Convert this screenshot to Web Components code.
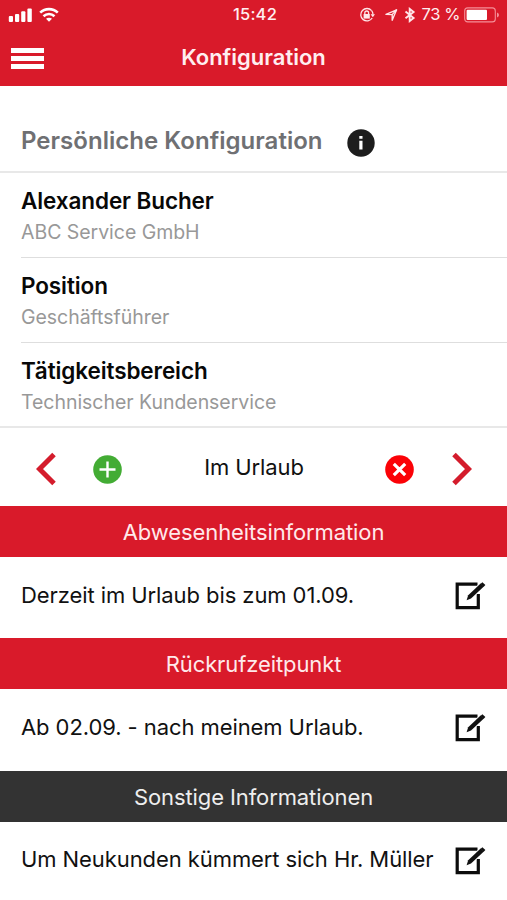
<!DOCTYPE html>
<html lang="de">
<head>
<meta charset="utf-8">
<title>Konfiguration</title>
<style>
  body {
    margin: 0;
    background: #fff;
    color: #111;
    font-family: Inter, "Liberation Sans", sans-serif;
    --red: #d91a2a;
  }
</style>
</head>
<body>
<config-app>
  <status-bar time="15:42" battery="73 %"></status-bar>
  <nav-bar>Konfiguration</nav-bar>
  <section-title>Persönliche Konfiguration</section-title>
  <profile-row label="Alexander Bucher">ABC Service GmbH</profile-row>
  <profile-row label="Position">Geschäftsführer</profile-row>
  <profile-row label="Tätigkeitsbereich" last>Technischer Kundenservice</profile-row>
  <status-picker>Im Urlaub</status-picker>
  <info-band>Abwesenheitsinformation</info-band>
  <info-row>Derzeit im Urlaub bis zum 01.09.</info-row>
  <info-band>Rückrufzeitpunkt</info-band>
  <info-row>Ab 02.09. - nach meinem Urlaub.</info-row>
  <info-band dark>Sonstige Informationen</info-band>
  <info-row>Um Neukunden kümmert sich Hr. Müller</info-row>
</config-app>

<script>
function define(name, html, setup) {
  const template = document.createElement('template');
  template.innerHTML = html;
  customElements.define(name, class extends HTMLElement {
    constructor() {
      super();
      this.attachShadow({ mode: 'open' });
      this.shadowRoot.appendChild(template.content.cloneNode(true));
      if (setup) setup(this, this.shadowRoot);
    }
  });
}

define('config-app', `
<style>
:host {
  display: flex;
  flex-direction: column;
  width: 507px;
  height: 900px;
  overflow: hidden;
}
::slotted(*) { flex: none; }
</style>
<slot></slot>
`);

define('status-bar', `
<style>
:host {
  display: grid;
  grid-template-columns: 1fr auto 1fr;
  align-items: center;
  height: 29px;
  padding: 0 7px 0 8px;
  box-sizing: border-box;
  background: var(--red);
  color: #ffeef0;
  font-size: 16.5px;
  line-height: 29px;
}
svg { display: block; }
.left { display: flex; align-items: center; gap: 7px; }
.time { font-weight: 500; letter-spacing: 0.2px; transform: translateX(1px); }
.right { display: flex; align-items: center; justify-content: flex-end; }
.battery { margin: 0 4px 0 6px; letter-spacing: -0.4px; }
</style>
<div class="left">
  <svg width="24" height="16" viewBox="0 0 24 16" fill="#fff">
    <rect x="0.8" y="9" width="4.2" height="6" rx="1"></rect>
    <rect x="7" y="7" width="4.2" height="8" rx="1"></rect>
    <rect x="13.2" y="4.2" width="4.2" height="10.8" rx="1"></rect>
    <rect x="19.4" y="1.5" width="4.4" height="13.5" rx="1"></rect>
  </svg>
  <svg width="20" height="16" viewBox="0 0 20 16" fill="none" stroke="#fff" stroke-width="2.6">
    <path d="M1.2 5.6C6.1 0.9 13.9 0.9 18.8 5.6"></path>
    <path d="M4.5 9.3C7.6 6.3 12.4 6.3 15.5 9.3"></path>
    <path d="M10 14.8L7 11.8C8.7 10.3 11.3 10.3 13 11.8Z" fill="#fff" stroke="none"></path>
  </svg>
</div>
<div class="time"></div>
<div class="right">
  <svg width="16" height="16" viewBox="0 0 16 16" fill="none" stroke="#ffe6e8" stroke-width="1.3">
    <path d="M12.6 3.6A6.2 6.2 0 1 0 13.2 11"></path>
    <path d="M12.6 3.6A6.2 6.2 0 0 1 14 7.4"></path>
    <path d="M11.6 7.2H16L13.8 10.2Z" fill="#ffe6e8" stroke="none"></path>
    <rect x="4.6" y="7" width="6.2" height="4.6" fill="#ffe6e8" stroke="none"></rect>
    <path d="M5.8 7V5.9A1.9 1.9 0 0 1 9.6 5.9V7"></path>
  </svg>
  <svg width="14" height="16" viewBox="0 0 14 16" fill="none" stroke="#ffe6e8" stroke-width="1.4" stroke-linejoin="round" style="margin-left: 9px">
    <path d="M12.6 2.8L8.2 13.2V7.6L2 7.4Z"></path>
    <path d="M12.6 2.8L8.2 7.6"></path>
  </svg>
  <svg width="12" height="16" viewBox="0 0 12 16" fill="none" stroke="#ffe6e8" stroke-width="1.9" style="margin-left: 6px">
    <path d="M1.5 4.6L9.6 10.9L5.7 14V1.9L9.6 5L1.5 11.3"></path>
  </svg>
  <span class="battery"></span>
  <svg width="36" height="16" viewBox="0 0 36 16">
    <rect x="0.7" y="0.9" width="30.6" height="14" rx="3" fill="none" stroke="#f58f98" stroke-width="1.1"></rect>
    <rect x="2.6" y="2.8" width="20.4" height="10.2" rx="1" fill="#fff"></rect>
    <path d="M33 5.6Q35 6.2 35 8Q35 9.8 33 10.4Z" fill="#f58f98"></path>
  </svg>
</div>
`, (host, root) => {
  root.querySelector('.time').textContent = host.getAttribute('time');
  root.querySelector('.battery').textContent = host.getAttribute('battery');
});

define('nav-bar', `
<style>
:host {
  display: grid;
  grid-template-columns: 1fr auto 1fr;
  align-items: center;
  height: 57px;
  padding: 0 11px;
  box-sizing: border-box;
  background: var(--red);
  color: #ffeef0;
  font-size: 22px;
  font-weight: 600;
  line-height: 54px;
}
.menu {
  display: grid;
  gap: 3px;
  width: 33px;
  padding-top: 2px;
}
.menu i { height: 5px; background: #fff; }
.title { padding-bottom: 2px; }
</style>
<div class="menu"><i></i><i></i><i></i></div>
<div class="title"><slot></slot></div>
`);

define('section-title', `
<style>
:host {
  display: flex;
  align-items: center;
  gap: 24.5px;
  height: 87px;
  padding: 23px 21px 0;
  box-sizing: border-box;
  border-bottom: 2px solid #e8e8e8;
  color: #6f7073;
  font-size: 24px;
  font-weight: 600;
  letter-spacing: 0.03px;
}
svg { display: block; margin-top: 5px; }
</style>
<span><slot></slot></span>
<svg width="28" height="28" viewBox="0 0 28 28">
  <circle cx="14" cy="14" r="13.7" fill="#1d1d1d"></circle>
  <path d="M12.3 7h3.2v2.8h-3.2zM12.3 11.8h3.2v8.8h-3.2z" fill="#fff"></path>
</svg>
`);

define('profile-row', `
<style>
:host {
  display: block;
  height: 85px;
  margin-left: 21px;
  box-sizing: border-box;
  padding-top: 13px;
  border-bottom: 1px solid #dedede;
}
:host([last]) {
  margin-left: 0;
  padding-left: 21px;
  border-bottom: 2px solid #e8e8e8;
}
.label {
  color: #080808;
  font-size: 22.5px;
  font-weight: 600;
  line-height: 30px;
  letter-spacing: -0.1px;
}
.value {
  padding-top: 1px;
  color: #989898;
  font-size: 19.5px;
  line-height: 30px;
  letter-spacing: -0.04px;
}
</style>
<div class="label"></div>
<div class="value"><slot></slot></div>
`, (host, root) => {
  root.querySelector('.label').textContent = host.getAttribute('label');
});

define('status-picker', `
<style>
:host {
  display: grid;
  grid-template-columns: 21px 29px 1fr 29px 21px;
  align-items: center;
  column-gap: 36px;
  height: 78px;
  padding: 4px 35px 0 36px;
  box-sizing: border-box;
  font-size: 22px;
  letter-spacing: -0.1px;
}
svg { display: block; }
.cancel { margin-left: -1px; }
span { text-align: center; padding-bottom: 4px; }
</style>
<svg width="21" height="34" viewBox="0 0 21 34" fill="none" stroke="#d41c2c" stroke-width="5">
  <path d="M18 2.5L3.5 17L18 31.5"></path>
</svg>
<svg width="29" height="29" viewBox="0 0 29 29">
  <circle cx="14.5" cy="14.5" r="14.3" fill="#43ac34"></circle>
  <path d="M14.5 6.5V22.5M6.5 14.5H22.5" stroke="#fff" stroke-width="2.4"></path>
</svg>
<span><slot></slot></span>
<svg class="cancel" width="29" height="29" viewBox="0 0 29 29">
  <circle cx="14.5" cy="14.5" r="14.3" fill="#fb0207"></circle>
  <path d="M8.8 8.8L20.2 20.2M20.2 8.8L8.8 20.2" stroke="#fff" stroke-width="3.2"></path>
</svg>
<svg width="21" height="34" viewBox="0 0 21 34" fill="none" stroke="#d41c2c" stroke-width="5">
  <path d="M3 2.5L17.5 17L3 31.5"></path>
</svg>
`);

define('info-band', `
<style>
:host {
  display: block;
  height: 51px;
  background: var(--red);
  color: #ffe9eb;
  font-size: 22px;
  line-height: 52px;
  letter-spacing: -0.1px;
  text-align: center;
}
:host([dark]) { background: #333; color: #eee; }
</style>
<slot></slot>
`);

define('info-row', `
<style>
:host {
  display: flex;
  justify-content: space-between;
  align-items: center;
  height: 81.3px;
  padding: 0 21px 3px;
  box-sizing: border-box;
  font-size: 22px;
  letter-spacing: -0.08px;
}
span { white-space: nowrap; padding-bottom: 3px; }
svg { display: block; flex: none; }
</style>
<span><slot></slot></span>
<svg width="32" height="30" viewBox="0 0 32 30">
  <path d="M23.5 3.2H3.2V26.7H24.3V13" fill="none" stroke="#0c0c0c" stroke-width="3.2"></path>
  <path d="M12.6 19.2L14.2 14.2L26.6 2.6L29.6 5.8L17 17.6Z" fill="#111" stroke="#fff" stroke-width="1.4" paint-order="stroke"></path>
  <path d="M26.4 2.9L28.4 1.2L31.4 4.1L29.5 6Z" fill="#111"></path>
</svg>
`);
</script>
</body>
</html>
